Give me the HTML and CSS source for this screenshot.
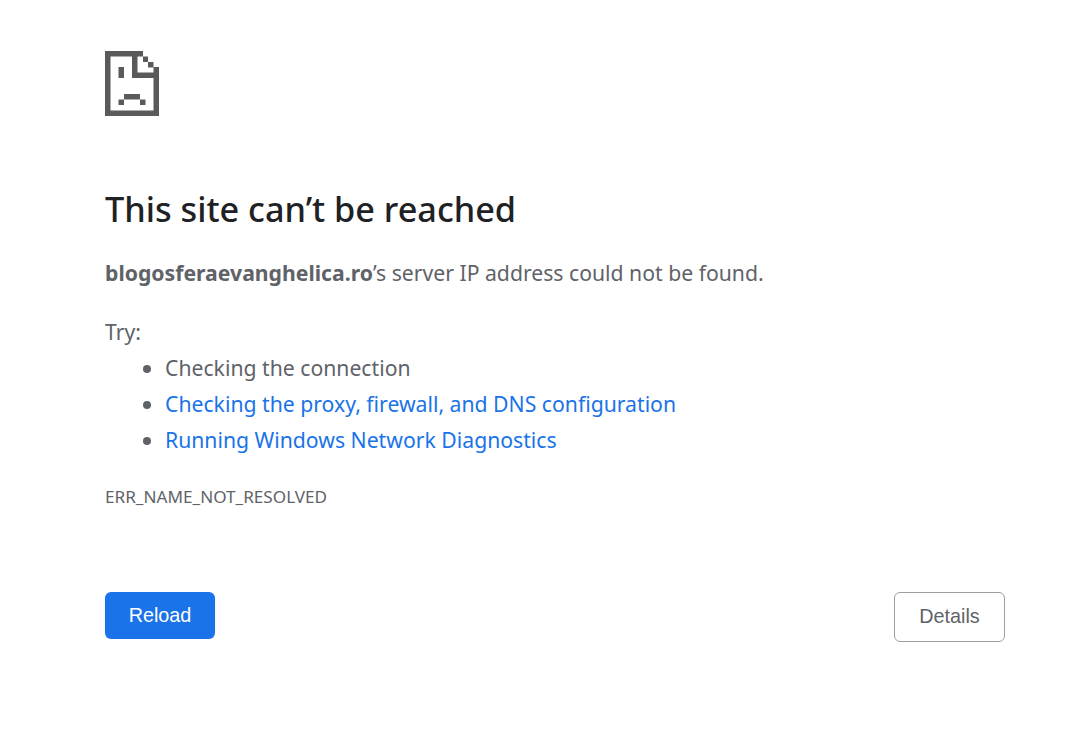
FILE: index.html
```html
<!DOCTYPE html>
<html lang="en">
<head>
<meta charset="utf-8">
<title>blogosferaevanghelica.ro</title>
<link rel="stylesheet" href="styles.css">
</head>
<body>
<main class="page">
  <svg class="icon" width="54" height="66" viewBox="0 0 54 66" aria-hidden="true">
    <g fill="#5a5a5a">
      <rect x="0" y="0" width="38" height="5.5"/>
      <rect x="0" y="0" width="5.5" height="65"/>
      <rect x="0" y="59.5" width="54" height="5.5"/>
      <rect x="48.5" y="16" width="5.5" height="49"/>
      <rect x="27" y="0" width="5.5" height="27"/>
      <rect x="27" y="21.5" width="27" height="5.5"/>
      <rect x="38" y="5.5" width="5" height="5.5"/>
      <rect x="43" y="11" width="5.5" height="5.5"/>
      <rect x="13.5" y="16" width="5.5" height="11"/>
      <rect x="19" y="43" width="16" height="5.5"/>
      <rect x="13.5" y="48.5" width="5.5" height="5.5"/>
      <rect x="35" y="48.5" width="5.5" height="5.5"/>
    </g>
  </svg>
  <h1 class="title">This site can’t be reached</h1>
  <p class="summary"><strong>blogosferaevanghelica.ro</strong>’s server IP address could not be found.</p>
  <p class="try">Try:</p>
  <ul class="suggestions">
    <li>Checking the connection</li>
    <li><a href="#">Checking the proxy, firewall, and DNS configuration</a></li>
    <li><a href="#">Running Windows Network Diagnostics</a></li>
  </ul>
  <div class="code">ERR_NAME_NOT_RESOLVED</div>
  <div class="actions">
    <button class="btn btn-primary" type="button">Reload</button>
    <button class="btn btn-secondary" type="button">Details</button>
  </div>
</main>
</body>
</html>
```
FILE: styles.css
```css
* { box-sizing: border-box; }
html, body { margin: 0; background: #fff; }
body {
  font-family: "Noto Sans", "Open Sans", sans-serif;
  color: #5f6368;
  font-size: 21.2px;
}
.page {
  width: 900px;
  margin-left: 105px;
  padding-top: 51px;
}
.icon { display: block; }
.title {
  margin: 68px 0 0;
  color: #202124;
  font-size: 34.25px;
  font-weight: 500;
  line-height: 48px;
}
.summary {
  margin: 22px 0 0;
  line-height: 36px;
}
.summary strong { font-weight: 700; }
.try {
  margin: 23px 0 0;
  line-height: 36px;
}
.suggestions {
  margin: 0;
  padding: 0 0 0 60px;
  line-height: 36px;
}
.suggestions a { color: #1a73e8; text-decoration: none; }
.code {
  margin-top: 27px;
  font-size: 17.15px;
  line-height: 24px;
}
.actions {
  display: flex;
  justify-content: space-between;
  align-items: flex-start;
  margin-top: 83px;
}
.btn {
  width: 110px;
  font-family: "Liberation Sans", Arial, sans-serif;
  font-size: 19.8px;
  border-radius: 6px;
  padding: 0;
}
.btn-primary {
  height: 47px;
  background: #1a73e8;
  border: 0;
  color: #fff;
}
.btn-secondary {
  width: 111px;
  height: 50px;
  padding-bottom: 2px;
  background: #fff;
  border: 1px solid #9e9ea0;
  color: #5f6368;
}
```
